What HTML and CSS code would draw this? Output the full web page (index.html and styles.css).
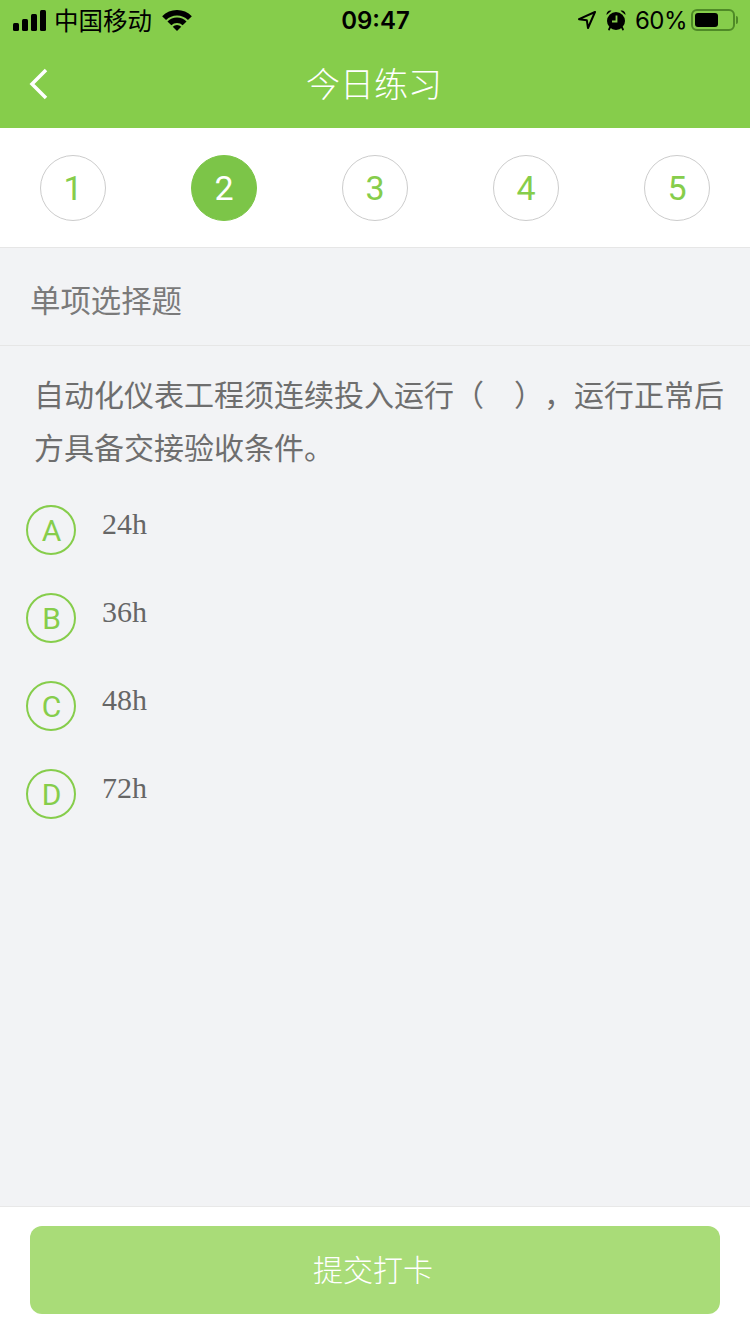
FILE: index.html
```html
<!DOCTYPE html>
<html lang="zh-CN">

<head>
    <meta charset="UTF-8">
    <meta name="viewport" content="width=device-width, initial-scale=1.0">
    <title>今日练习</title>
    <link rel="stylesheet" href="styles.css">
</head>

<body>
    <div class="page">
        <div class="header">
            <div class="status">
                <div class="status-left">
                    <svg class="signal" width="33" height="21" viewBox="0 0 33 21">
                        <rect x="0" y="13" width="6" height="8" rx="1.5" />
                        <rect x="9" y="9" width="6" height="12" rx="1.5" />
                        <rect x="18" y="4" width="6" height="17" rx="1.5" />
                        <rect x="27" y="0" width="6" height="21" rx="1.5" />
                    </svg>
                    <span class="carrier">中国移动</span>
                    <svg class="wifi" width="30" height="21" viewBox="0 0 30 21">
                        <path d="M.15 6.15A21 21 0 0 1 29.85 6.15L25.96 10.04A15.5 15.5 0 0 0 4.04 10.04Z" />
                        <path d="M5.45 11.45A13.5 13.5 0 0 1 24.55 11.45L20.66 15.34A8 8 0 0 0 9.34 15.34Z" />
                        <path d="M10.76 16.76A6 6 0 0 1 19.24 16.76L15 21Z" />
                    </svg>
                </div>
                <div class="time">09:47</div>
                <div class="status-right">
                    <svg class="arrow" width="18" height="18" viewBox="0 0 18 18">
                        <path d="M17 1L1 8.200L8.800 9.200L10 17Z" fill="none" stroke="#000" stroke-width="2" stroke-linejoin="round" />
                    </svg>
                    <svg class="alarm" width="22" height="22" viewBox="0 0 22 22">
                        <path d="M1.500 6C1.500 2.800 3.800 1 6.500 1.800ZM20.500 6C20.500 2.800 18.200 1 15.500 1.800Z" />
                        <circle cx="11" cy="12" r="9" />
                        <path d="M11.500 6.500V12.500H7" fill="none" stroke="#86cd4b" stroke-width="1.800" />
                        <path d="M5 18.500L4 20.500M17 18.500L18 20.500" stroke="#000" stroke-width="1.800" stroke-linecap="round" />
                    </svg>
                    <span class="percent">60%</span>
                    <div class="battery">
                        <div class="battery-fill"></div>
                    </div>
                    <div class="battery-nub"></div>
                </div>
            </div>
            <div class="nav">
                <svg class="back" width="20" height="32" viewBox="0 0 20 32">
                    <path d="M17 2L3 16L17 30" fill="none" stroke="#fff" stroke-width="3.500" />
                </svg>
                <div class="nav-title">今日练习</div>
            </div>
        </div>

        <div class="steps">
            <div class="step">1</div>
            <div class="step step-active">2</div>
            <div class="step">3</div>
            <div class="step">4</div>
            <div class="step">5</div>
        </div>

        <div class="content">
            <div class="type">单项选择题</div>
            <div class="question">自动化仪表工程须连续投入运行（　），运行正常后方具备交接验收条件。</div>
            <ul class="options">
                <li class="option"><span class="letter">A</span><span class="answer">24h</span></li>
                <li class="option"><span class="letter">B</span><span class="answer">36h</span></li>
                <li class="option"><span class="letter">C</span><span class="answer">48h</span></li>
                <li class="option"><span class="letter">D</span><span class="answer">72h</span></li>
            </ul>
        </div>

        <div class="footer">
            <div class="submit">提交打卡</div>
        </div>
    </div>
</body>

</html>
```

FILE: styles.css
```css
html,
body {
    margin: 0;
    padding: 0;
    background-color: #f2f3f5;
}

.page {
    width: 750px;
    height: 1334px;
    display: flex;
    flex-direction: column;
    overflow: hidden;
    font-family: "Noto Sans CJK SC", "Liberation Sans", sans-serif;
}

.header {
    height: 128px;
    background-color: #86cd4b;
}

.status {
    height: 40px;
    display: flex;
    align-items: center;
    padding: 0 12px 0 13px;
    color: #000;
}

.status-left,
.status-right {
    flex: 1;
    display: flex;
    align-items: center;
}

.status-right {
    justify-content: flex-end;
}

.carrier {
    margin-left: 8px;
    font-size: 24.5px;
    line-height: 40px;
}

.wifi {
    margin-left: 10px;
}

.time {
    font-family: Inter, "Liberation Sans", sans-serif;
    font-size: 24px;
    font-weight: 600;
}

.alarm {
    margin-left: 9px;
}

.percent {
    margin-left: 8px;
    font-family: Inter, "Liberation Sans", sans-serif;
    font-size: 24px;
    letter-spacing: -0.5px;
}

.battery {
    box-sizing: border-box;
    width: 44px;
    height: 22px;
    margin-left: 4px;
    padding: 2px;
    border: 2px solid #4f8a27;
    border-radius: 6px;
}

.battery-fill {
    width: 23px;
    height: 100%;
    background-color: #000;
    border-radius: 3px;
}

.battery-nub {
    width: 2px;
    height: 8px;
    margin-left: 1px;
    background-color: #4f8a27;
    border-radius: 0 2px 2px 0;
}

.nav {
    position: relative;
    height: 88px;
    display: flex;
    align-items: center;
    justify-content: center;
}

.back {
    position: absolute;
    left: 29px;
    top: 28px;
}

.nav-title {
    padding: 0 2px 4px 0;
    font-size: 34px;
    font-weight: 300;
    color: #fff;
}

.steps {
    height: 119px;
    box-sizing: border-box;
    padding: 27px 40px 0;
    display: flex;
    justify-content: space-between;
    background-color: #fff;
}

.step {
    box-sizing: border-box;
    width: 66px;
    height: 66px;
    display: flex;
    align-items: center;
    justify-content: center;
    border: 1px solid #ccc;
    border-radius: 50%;
    font-family: Roboto, "Liberation Sans", sans-serif;
    font-size: 34px;
    color: #86cd4b;
}

.step-active {
    background-color: #7cc548;
    border-color: #7cc548;
    color: #fff;
}

.content {
    flex: 1;
}

.type {
    height: 99px;
    box-sizing: border-box;
    padding-left: 30px;
    border-top: 1px solid #e6e6e6;
    border-bottom: 1px solid #e6e6e6;
    font-size: 30.4px;
    line-height: 102px;
    color: #7a7a7a;
}

.question {
    padding: 21px 20px 0 34px;
    font-size: 30px;
    line-height: 53px;
    color: #6e6e6e;
    text-spacing-trim: space-all;
}

.options {
    margin: 0;
    padding: 32px 0 0 26px;
    list-style: none;
}

.option {
    height: 88px;
    display: flex;
    align-items: flex-start;
}

.letter {
    box-sizing: border-box;
    width: 50px;
    height: 50px;
    padding-left: 1px;
    display: flex;
    align-items: center;
    justify-content: center;
    border: 2px solid #86cd4b;
    border-radius: 50%;
    font-family: Roboto, "Liberation Sans", sans-serif;
    font-size: 30px;
    color: #86cd4b;
}

.answer {
    margin-left: 26px;
    font-family: "Liberation Serif", serif;
    font-size: 30px;
    line-height: 38px;
    color: #666;
}

.footer {
    height: 128px;
    box-sizing: border-box;
    padding: 19px 30px 0;
    border-top: 1px solid #e8e8e8;
    background-color: #fff;
}

.submit {
    height: 88px;
    box-sizing: border-box;
    padding: 0 4px 4px 0;
    display: flex;
    align-items: center;
    justify-content: center;
    background-color: #a9dc78;
    border-radius: 12px;
    font-size: 30px;
    font-weight: 300;
    color: #fff;
}
```
